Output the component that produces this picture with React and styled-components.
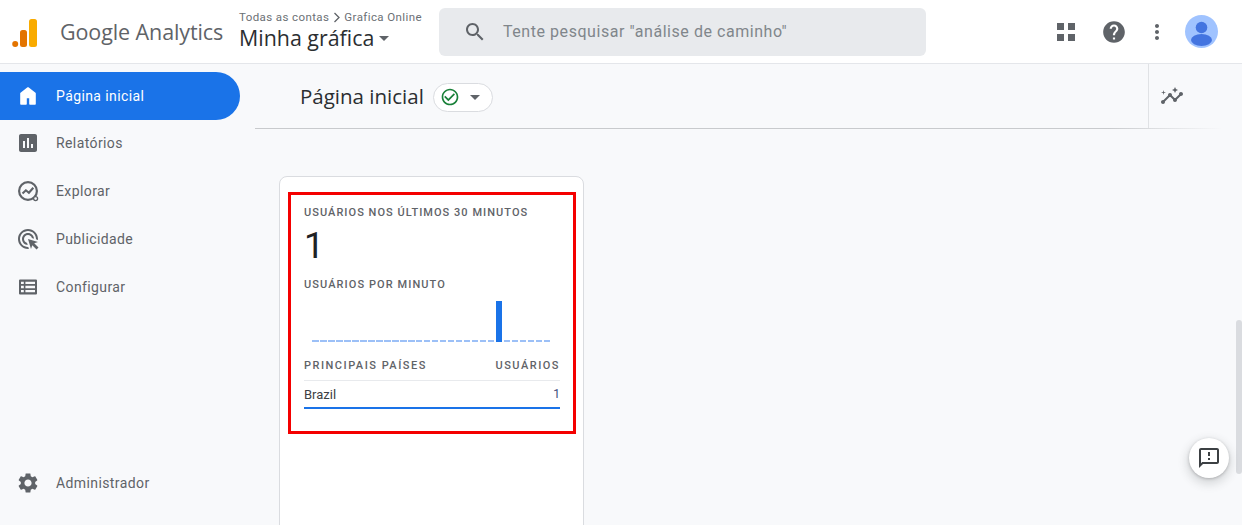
import React from "react";
import styled, { createGlobalStyle } from "styled-components";

const Global = createGlobalStyle`
  html, body { margin: 0; padding: 0; height: 100%; overflow: hidden; background: #f8f9fb; }
  body { font-family: Roboto, "Liberation Sans", sans-serif; }
  * { box-sizing: border-box; }
`;

const Page = styled.div`
  position: relative;
  width: 1242px;
  height: 525px;
  overflow: hidden;
  display: flex;
  flex-direction: column;
`;

const Header = styled.header`
  height: 64px;
  flex: none;
  display: flex;
  align-items: center;
  background: #fff;
  border-bottom: 1px solid #e4e6ea;
`;

const Logo = styled.svg`
  width: 26px;
  height: 30px;
  margin-left: 12px;
  margin-top: 2px;
  flex: none;
`;

const Brand = styled.div`
  margin-left: 22px;
  width: 179px;
  flex: none;
  font-family: "Open Sans", sans-serif;
  font-size: 21.5px;
  letter-spacing: -0.1px;
  color: #5f6368;
  white-space: nowrap;
  margin-top: -1px;
`;

const Account = styled.div`
  width: 200px;
  flex: none;
  display: flex;
  flex-direction: column;
  margin-top: -1px;
`;

const Crumbs = styled.div`
  display: flex;
  align-items: center;
  font-size: 11.5px;
  letter-spacing: 0.4px;
  line-height: 14px;
  color: #6b7075;
  white-space: nowrap;
`;

const Chevron = styled.svg`
  width: 8px;
  height: 11px;
  margin: 0 3px 0 4px;
`;

const AccountName = styled.div`
  display: flex;
  align-items: center;
  font-family: "Open Sans", sans-serif;
  font-size: 21.4px;
  line-height: 28px;
  color: #2b2e31;
  white-space: nowrap;
`;

const Caret = styled.span`
  display: inline-block;
  width: 0;
  height: 0;
  border-left: 5px solid transparent;
  border-right: 5px solid transparent;
  border-top: 5px solid ${(p) => p.$color};
  margin-left: ${(p) => p.$gap}px;
`;

const Search = styled.div`
  width: 487px;
  height: 48px;
  flex: none;
  display: flex;
  align-items: center;
  padding-left: 24px;
  background: #e8eaed;
  border-radius: 6px;
`;

const SearchText = styled.span`
  margin-left: 16px;
  font-size: 16px;
  letter-spacing: 0.55px;
  color: #80868b;
  white-space: nowrap;
`;

const Tools = styled.div`
  display: flex;
  align-items: center;
  margin-left: 131px;
`;

const ToolIcon = styled.svg`
  width: ${(p) => p.$size}px;
  height: ${(p) => p.$size}px;
  margin-left: ${(p) => p.$gap}px;
  fill: #5f6368;
  flex: none;
`;

const Avatar = styled.svg`
  width: 33px;
  height: 33px;
  margin-left: 16px;
  flex: none;
`;

const Body = styled.div`
  flex: 1;
  display: flex;
  min-height: 0;
`;

const Sidebar = styled.nav`
  width: 240px;
  flex: none;
  display: flex;
  flex-direction: column;
  padding: 8px 0 18px;
`;

const NavItem = styled.div`
  height: 48px;
  flex: none;
  margin-top: ${(p) => (p.$bottom ? "auto" : "0")};
  margin-bottom: ${(p) => (p.$active ? "-1px" : "0")};
  display: flex;
  align-items: center;
  gap: 16px;
  padding-left: 16px;
  border-radius: 0 24px 24px 0;
  background: ${(p) => (p.$active ? "#1a73e8" : "transparent")};
  color: ${(p) => (p.$active ? "#fff" : "#5f6368")};
  font-size: 14px;
  letter-spacing: 0.4px;
  svg { width: 24px; height: 24px; fill: currentColor; flex: none; }
`;

const Main = styled.main`
  flex: 1;
  min-width: 0;
  display: flex;
  flex-direction: column;
`;

const TitleRow = styled.div`
  height: 65px;
  flex: none;
  margin: 0 20px 0 15px;
  display: flex;
  align-items: center;
  padding-left: 45px;
  border-bottom: 1px solid;
  border-image: linear-gradient(to right, #c8cacd 0, #c8cacd 88%, rgba(200,202,205,0) 100%) 1;
`;

const Title = styled.h1`
  margin: 0;
  font-family: "Open Sans", sans-serif;
  font-weight: 400;
  font-size: 20.5px;
  color: #2b2e31;
  white-space: nowrap;
`;

const StatusChip = styled.div`
  width: 60px;
  height: 29px;
  margin: 2px 0 0 9px;
  display: flex;
  align-items: center;
  padding-left: 6px;
  border: 1px solid #dadce0;
  border-radius: 15px;
  background: #fff;
`;

const CheckIcon = styled.svg`
  width: 20px;
  height: 20px;
  fill: #188038;
  flex: none;
`;

const InsightCell = styled.div`
  margin-left: auto;
  width: 74px;
  height: 100%;
  display: flex;
  align-items: center;
  padding-left: 11px;
  border-left: 1px solid #e0e2e5;
  svg { width: 24px; height: 24px; fill: #5f6368; }
`;

const Card = styled.section`
  width: 305px;
  height: 400px;
  flex: none;
  margin: 47px 0 0 39px;
  padding: 15px 7px 0 8px;
  background: #fff;
  border: 1px solid #dadce0;
  border-radius: 8px;
`;

const Highlight = styled.div`
  width: 288px;
  height: 242px;
  padding: 0 13px;
  border: 3px solid #f40000;
`;

const Eyebrow = styled.div`
  font-size: 11px;
  font-weight: 500;
  letter-spacing: ${(p) => p.$spacing}px;
  line-height: 14px;
  color: #5f6368;
  white-space: nowrap;
`;

const Heading = styled(Eyebrow)`
  margin-top: ${(p) => p.$top}px;
`;

const BigNumber = styled.div`
  margin-top: 5px;
  height: 42px;
  font-size: 36px;
  font-weight: 400;
  line-height: 42px;
  color: #202124;
`;

const Chart = styled.div`
  height: 42px;
  margin: 8px 8px 0;
  display: flex;
  align-items: flex-end;
  gap: 1.3px;
`;

const Bar = styled.div`
  width: 6.7px;
  flex: none;
  height: ${(p) => (p.$value ? "41px" : "2px")};
  background: ${(p) => (p.$value ? "#1a73e8" : "#9cc0f7")};
`;

const TableHead = styled.div`
  display: flex;
  justify-content: space-between;
  margin-top: 17px;
  height: 16px;
  padding-bottom: 2px;
  align-items: center;
`;

const TableRow = styled.div`
  height: 29px;
  margin-top: 5px;
  display: flex;
  justify-content: space-between;
  align-items: center;
  border-top: 1px solid #e8eaed;
  border-bottom: 2px solid #1a73e8;
  font-size: 13px;
  color: #3c4043;
`;

const RowValue = styled.span`
  font-size: 12px;
  color: #3c4a7a;
`;

const Scrollbar = styled.div`
  position: absolute;
  left: 1236px;
  top: 320px;
  width: 6px;
  height: 154px;
  background: #dadce0;
  border-radius: 3px;
`;

const FeedbackButton = styled.div`
  position: absolute;
  left: 1189px;
  top: 438px;
  width: 40px;
  height: 40px;
  display: flex;
  align-items: center;
  justify-content: center;
  background: #fff;
  border-radius: 50%;
  box-shadow: 0 1px 3px rgba(60,64,67,.3), 0 4px 8px 3px rgba(60,64,67,.15);
  svg { width: 24px; height: 24px; fill: #3c4043; }
`;

const icons = {
  reports:
    "M19 3H5c-1.1 0-2 .9-2 2v14c0 1.1.9 2 2 2h14c1.1 0 2-.9 2-2V5c0-1.1-.9-2-2-2zM9 17H7v-7h2v7zm4 0h-2V7h2v10zm4 0h-2v-4h2v4z",
  ads: "M11.71 17.99C8.53 17.84 6 15.22 6 12c0-3.31 2.69-6 6-6 3.22 0 5.84 2.53 5.99 5.71l-2.1-.63C15.48 9.31 13.89 8 12 8c-2.21 0-4 1.79-4 4 0 1.89 1.31 3.48 3.08 3.89l.63 2.1zM22 12c0 .3-.01.6-.04.9l-1.97-.59c.01-.1.01-.21.01-.31 0-4.42-3.58-8-8-8s-8 3.58-8 8 3.58 8 8 8c.1 0 .21 0 .31-.01l.59 1.97c-.3.03-.6.04-.9.04-5.52 0-10-4.48-10-10S6.48 2 12 2s10 4.48 10 10zm-3.77 4.26L22 15l-10-3 3 10 1.26-3.77 4.27 4.27 1.98-1.98-4.28-4.26z",
  settings:
    "M19.14 12.94c.04-.3.06-.61.06-.94 0-.32-.02-.64-.07-.94l2.03-1.58c.18-.14.23-.41.12-.61l-1.92-3.32c-.12-.22-.37-.29-.59-.22l-2.39.96c-.5-.38-1.03-.7-1.62-.94l-.36-2.54c-.04-.24-.24-.41-.48-.41h-3.84c-.24 0-.43.17-.47.41l-.36 2.54c-.59.24-1.13.57-1.62.94l-2.39-.96c-.22-.08-.47 0-.59.22L2.74 8.87c-.12.21-.08.47.12.61l2.03 1.58c-.05.3-.09.63-.09.94s.02.64.07.94l-2.03 1.58c-.18.14-.23.41-.12.61l1.92 3.32c.12.22.37.29.59.22l2.39-.96c.5.38 1.03.7 1.62.94l.36 2.54c.05.24.24.41.48.41h3.84c.24 0 .44-.17.47-.41l.36-2.54c.59-.24 1.13-.56 1.62-.94l2.39.96c.22.08.47 0 .59-.22l1.92-3.32c.12-.22.07-.47-.12-.61l-2.01-1.58zM12 15.6c-1.98 0-3.6-1.62-3.6-3.6s1.62-3.6 3.6-3.6 3.6 1.62 3.6 3.6-1.62 3.6-3.6 3.6z",
  help: "M12 2C6.48 2 2 6.48 2 12s4.48 10 10 10 10-4.48 10-10S17.52 2 12 2zm1 17h-2v-2h2v2zm2.07-7.75l-.9.92C13.45 12.9 13 13.5 13 15h-2v-.5c0-1.1.45-2.1 1.17-2.83l1.24-1.26c.37-.36.59-.86.59-1.41 0-1.1-.9-2-2-2s-2 .9-2 2H8c0-2.21 1.79-4 4-4s4 1.79 4 4c0 .88-.36 1.68-.93 2.25z",
  search:
    "M15.5 14h-.79l-.28-.27C15.41 12.59 16 11.11 16 9.5 16 5.91 13.09 3 9.5 3S3 5.91 3 9.5 5.91 16 9.5 16c1.61 0 3.09-.59 4.23-1.57l.27.28v.79l5 4.99L20.49 19l-4.99-5zm-6 0C7.01 14 5 11.99 5 9.5S7.01 5 9.5 5 14 7.01 14 9.5 11.99 14 9.5 14z",
  feedback:
    "M20 2H4c-1.1 0-2 .9-2 2v18l4-4h14c1.1 0 2-.9 2-2V4c0-1.1-.9-2-2-2zm0 14H5.17L4 17.17V4h16v12zM11 12h2v2h-2zm0-6h2v4h-2z",
  check:
    "M16.59 7.58L10 14.17l-3.59-3.58L5 12l5 5 8-8zM12 2C6.48 2 2 6.48 2 12s4.48 10 10 10 10-4.48 10-10S17.52 2 12 2zm0 18c-4.42 0-8-3.58-8-8s3.58-8 8-8 8 3.58 8 8-3.58 8-8 8z",
  insights:
    "M21 8c-1.45 0-2.26 1.44-1.93 2.51l-3.55 3.56c-.3-.09-.74-.09-1.04 0l-2.55-2.55C12.27 10.45 11.46 9 10 9c-1.45 0-2.27 1.44-1.93 2.52l-4.56 4.55C2.44 15.74 1 16.55 1 18c0 1.1.9 2 2 2 1.45 0 2.26-1.44 1.93-2.51l4.55-4.56c.3.09.74.09 1.04 0l2.55 2.55C12.73 16.55 13.54 18 15 18c1.45 0 2.27-1.44 1.93-2.52l3.56-3.55c1.07.33 2.51-.48 2.51-1.93 0-1.1-.9-2-2-2zM15 9l.94-2.07L18 6l-2.06-.93L15 3l-.92 2.07L12 6l2.08.93zM3.5 11L4 9l2-.5L4 8l-.5-2L3 8l-2 .5L3 9z",
  more: "M12 8c1.1 0 2-.9 2-2s-.9-2-2-2-2 .9-2 2 .9 2 2 2zm0 2c-1.1 0-2 .9-2 2s.9 2 2 2 2-.9 2-2-.9-2-2-2zm0 6c-1.1 0-2 .9-2 2s.9 2 2 2 2-.9 2-2-.9-2-2-2z",
};

const Path = ({ name }) => (
  <svg viewBox="0 0 24 24" aria-hidden="true">
    <path d={icons[name]} />
  </svg>
);

const HomeIcon = () => (
  <svg viewBox="0 0 24 24" aria-hidden="true">
    <path
      d="M12 4L5 9.5V20h5v-6.5h4V20h5V9.5z"
      stroke="currentColor"
      strokeWidth="1.6"
      strokeLinejoin="round"
    />
  </svg>
);

const ExploreIcon = () => (
  <svg viewBox="0 0 24 24" aria-hidden="true">
    <circle cx="12" cy="12" r="8.9" fill="none" stroke="currentColor" strokeWidth="2.2" />
    <path
      d="M6.5 14.6l3.4-3.3 3 2.4 4.4-4.9"
      fill="none"
      stroke="currentColor"
      strokeWidth="2.1"
    />
    <circle cx="19.6" cy="19.6" r="2" fill="#f8f9fb" stroke="currentColor" strokeWidth="1.3" />
  </svg>
);

const ConfigureIcon = () => (
  <svg viewBox="0 0 24 24" aria-hidden="true">
    <path
      d="M4 4.500h16a1 1 0 0 1 1 1v13a1 1 0 0 1-1 1H4a1 1 0 0 1-1-1v-13a1 1 0 0 1 1-1zm1 2.200v2.400h2.800V6.700H5zm4.400 0v2.400H19V6.700H9.400zM5 10.800v2.400h2.800v-2.400H5zm4.400 0v2.400H19v-2.400H9.400zM5 14.900v2.400h2.800v-2.400H5zm4.400 0v2.400H19v-2.400H9.400z"
      fillRule="evenodd"
    />
  </svg>
);

const bars = Array.from({ length: 30 }, (_, i) => (i === 23 ? 1 : 0));

export default function App() {
  return (
    <Page>
      <Global />
      <Header>
        <Logo viewBox="0 0 26 30" aria-label="Google Analytics">
          <rect x="17" y="1" width="8" height="28" rx="2.5" fill="#f9ab00" />
          <rect x="8" y="12" width="7" height="17" rx="2.5" fill="#e37400" />
          <circle cx="3.2" cy="26" r="3" fill="#e37400" />
        </Logo>
        <Brand>Google Analytics</Brand>
        <Account>
          <Crumbs>
            Todas as contas
            <Chevron viewBox="0 0 8 11">
              <path d="M1.5 1l4.5 4.5L1.5 10" fill="none" stroke="#5f6368" strokeWidth="1.3" />
            </Chevron>
            Grafica Online
          </Crumbs>
          <AccountName>
            Minha gráfica
            <Caret $color="#5f6368" $gap={5} />
          </AccountName>
        </Account>
        <Search>
          <ToolIcon viewBox="0 0 24 24" $size={24} $gap={0}>
            <path d={icons.search} />
          </ToolIcon>
          <SearchText>Tente pesquisar "análise de caminho"</SearchText>
        </Search>
        <Tools>
          <ToolIcon viewBox="0 0 18 18" $size={18} $gap={0}>
            <path d="M0 0h7v7H0zM11 0h7v7h-7zM0 11h7v7H0zM11 11h7v7h-7z" />
          </ToolIcon>
          <ToolIcon viewBox="0 0 24 24" $size={26} $gap={26}>
            <path d={icons.help} />
          </ToolIcon>
          <ToolIcon viewBox="0 0 24 24" $size={24} $gap={18}>
            <path d={icons.more} />
          </ToolIcon>
          <Avatar viewBox="0 0 33 33">
            <circle cx="16.5" cy="16.5" r="16.5" fill="#a0c3ff" />
            <circle cx="16.5" cy="12.5" r="5.8" fill="#4374e0" />
            <ellipse cx="16.5" cy="25" rx="10.5" ry="6" fill="#4374e0" />
          </Avatar>
        </Tools>
      </Header>
      <Body>
        <Sidebar>
          <NavItem $active>
            <HomeIcon />
            Página inicial
          </NavItem>
          <NavItem>
            <Path name="reports" />
            Relatórios
          </NavItem>
          <NavItem>
            <ExploreIcon />
            Explorar
          </NavItem>
          <NavItem>
            <Path name="ads" />
            Publicidade
          </NavItem>
          <NavItem>
            <ConfigureIcon />
            Configurar
          </NavItem>
          <NavItem $bottom>
            <Path name="settings" />
            Administrador
          </NavItem>
        </Sidebar>
        <Main>
          <TitleRow>
            <Title>Página inicial</Title>
            <StatusChip>
              <CheckIcon viewBox="0 0 24 24">
                <path d={icons.check} />
              </CheckIcon>
              <Caret $color="#5f6368" $gap={10} />
            </StatusChip>
            <InsightCell>
              <Path name="insights" />
            </InsightCell>
          </TitleRow>
          <Card>
            <Highlight>
              <Heading $top={11} $spacing={1.04}>USUÁRIOS NOS ÚLTIMOS 30 MINUTOS</Heading>
              <BigNumber>1</BigNumber>
              <Heading $top={11} $spacing={1.08}>USUÁRIOS POR MINUTO</Heading>
              <Chart>
                {bars.map((v, i) => (
                  <Bar key={i} $value={v} />
                ))}
              </Chart>
              <TableHead>
                <Eyebrow $spacing={1.5}>PRINCIPAIS PAÍSES</Eyebrow>
                <Eyebrow $spacing={1.5}>USUÁRIOS</Eyebrow>
              </TableHead>
              <TableRow>
                <span>Brazil</span>
                <RowValue>1</RowValue>
              </TableRow>
            </Highlight>
          </Card>
        </Main>
      </Body>
      <Scrollbar />
      <FeedbackButton>
        <Path name="feedback" />
      </FeedbackButton>
    </Page>
  );
}
